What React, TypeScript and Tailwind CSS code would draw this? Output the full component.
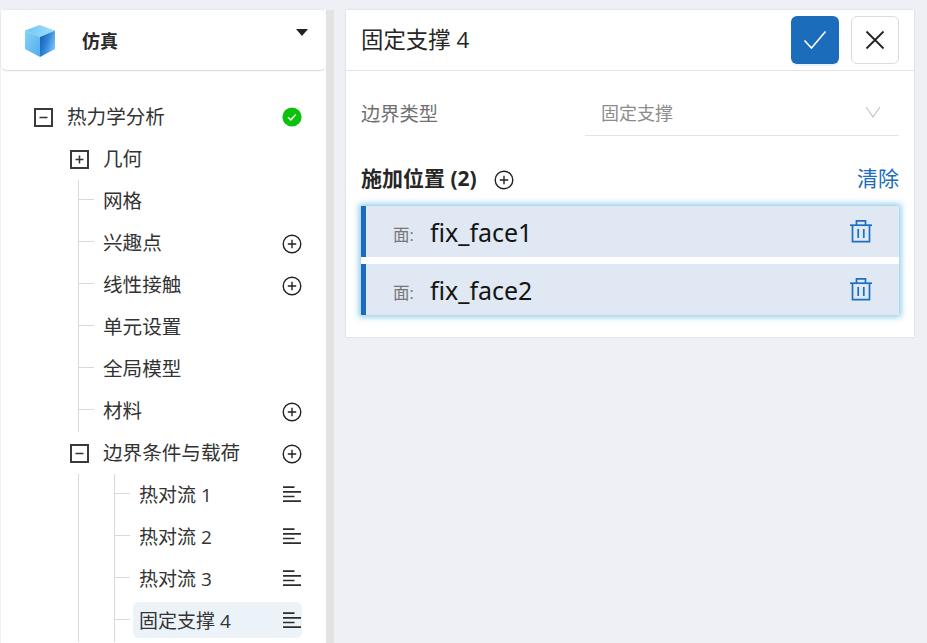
import React from "react";

const CJK = "font-['Open_Sans','Noto_Sans_CJK_SC',sans-serif]";

function BoxIcon({ plus }: { plus?: boolean }) {
  return (
    <svg width="19" height="19" viewBox="0 0 19 19" className="shrink-0">
      <rect x="1" y="1" width="17" height="17" fill="none" stroke="#3a3a3a" strokeWidth="2" />
      <path d="M5.5 9.5h8" stroke="#333" strokeWidth="1.5" />
      {plus && <path d="M9.5 5.5v8" stroke="#333" strokeWidth="1.5" />}
    </svg>
  );
}

function PlusCircle() {
  return (
    <svg width="20" height="20" viewBox="0 0 20 20" className="shrink-0 mt-[2px]">
      <circle cx="10" cy="10" r="8.8" fill="none" stroke="#222" strokeWidth="1.4" />
      <path d="M5.8 10h8.4M10 5.8v8.4" stroke="#222" strokeWidth="1.4" />
    </svg>
  );
}

function CheckBadge() {
  return (
    <svg width="20" height="20" viewBox="0 0 20 20" className="shrink-0">
      <circle cx="10" cy="10" r="9.6" fill="#0bc20b" />
      <path d="M6 10.2l2.8 2.7 5-5.4" fill="none" stroke="#fff" strokeWidth="1.5" />
    </svg>
  );
}

function ListIcon() {
  return (
    <svg width="18" height="18" viewBox="0 0 18 18" className="shrink-0">
      <path d="M0 2.2h11.5M0 6.8h18M0 11.5h11.5M0 16.2h18" stroke="#2c2c2c" strokeWidth="1.7" />
    </svg>
  );
}

function TrashIcon() {
  return (
    <svg width="24" height="24" viewBox="0 0 24 24" className="shrink-0">
      <g fill="none" stroke="#1e6fc0" strokeWidth="1.7">
        <path d="M1 6.2h22" />
        <path d="M7.5 6V1.8h9V6" />
        <path d="M3.5 6.2v16.4h17V6.2" />
        <path d="M9.2 10v9M14.8 10v9" />
      </g>
    </svg>
  );
}

function Cube() {
  return (
    <svg width="30" height="32" viewBox="0 0 30 32" className="shrink-0">
      <defs>
        <linearGradient id="cubeLeft" x1="0" y1="0" x2="1" y2="1">
          <stop offset="0" stopColor="#86d4f8" />
          <stop offset="1" stopColor="#50acea" />
        </linearGradient>
        <linearGradient id="cubeTop" x1="0" y1="0" x2="1" y2="0">
          <stop offset="0" stopColor="#6cc4f4" />
          <stop offset="1" stopColor="#a4e0fa" />
        </linearGradient>
        <linearGradient id="cubeRight" x1="0" y1="0" x2="1" y2="0.5">
          <stop offset="0" stopColor="#1058a8" />
          <stop offset="0.55" stopColor="#2f86d8" />
          <stop offset="1" stopColor="#76bdf5" />
        </linearGradient>
      </defs>
      <path d="M0 5.5L14.5 0 30 5.5 15 12z" fill="url(#cubeTop)" />
      <path d="M0 5.5L15 12v20L0 24z" fill="url(#cubeLeft)" />
      <path d="M30 5.5L15 12v20l15-8z" fill="url(#cubeRight)" />
    </svg>
  );
}

function HLine() {
  return <div className="h-px w-[15px] bg-[#d9d9d9] mb-[3px]" />;
}

function Guide({ width, tick }: { width: string; tick?: boolean }) {
  return (
    <div className={`h-full shrink-0 border-l border-[#d9d9d9] flex items-center ${width}`}>
      {tick && <HLine />}
    </div>
  );
}

function Top({ label, right }: { label: string; right?: React.ReactNode }) {
  return (
    <div className="h-[42px] flex items-center pl-[33px] pr-[24px]">
      <BoxIcon />
      <span className="ml-[14px] flex-1 text-[19.6px] text-[#333]">{label}</span>
      {right}
    </div>
  );
}

function Branch({ label, plus, right }: { label: string; plus?: boolean; right?: React.ReactNode }) {
  return (
    <div className="h-[42px] flex items-center pl-[69px] pr-[24px]">
      <BoxIcon plus={plus} />
      <span className="ml-[14px] flex-1 text-[19.6px] text-[#333]">{label}</span>
      {right}
    </div>
  );
}

function Leaf({ label, right }: { label: string; right?: React.ReactNode }) {
  return (
    <div className="h-[42px] flex items-center pl-[77px] pr-[24px]">
      <Guide width="w-[25px]" tick />
      <span className="flex-1 text-[19.6px] text-[#333]">{label}</span>
      {right}
    </div>
  );
}

function SubLeaf({ label, active }: { label: string; active?: boolean }) {
  return (
    <div className="h-[42px] flex items-center pl-[77px] pr-[24px]">
      <Guide width="w-[36px]" />
      <Guide width="w-[19px]" tick />
      <div
        className={`flex-1 h-[36px] mb-[2px] pl-[6px] pr-px rounded-[6px] flex items-center justify-between ${
          active ? "bg-[#ebf3f9]" : ""
        }`}
      >
        <span className="text-[19px] text-[#333] mt-[2px]">{label}</span>
        <ListIcon />
      </div>
    </div>
  );
}

function FaceRow({ name }: { name: string }) {
  return (
    <div className="h-[51px] bg-[#dfe8f3] border-l-[5px] border-[#1b6cbb] flex items-center pl-[27px] pr-[26px]">
      <span className="text-[16.5px] text-[#777] mt-[8px] w-[37px]">面:</span>
      <span className="flex-1 text-[25px] mt-[3px] text-[#141414] font-['Noto_Sans',sans-serif]">{name}</span>
      <div className="mb-[2px]">
        <TrashIcon />
      </div>
    </div>
  );
}

export default function App() {
  return (
    <div className={`h-screen overflow-hidden bg-[#eef0f5] flex pl-px pt-[10px] ${CJK}`}>
      {/* Left: model tree */}
      <div className="w-[325px] shrink-0 bg-white flex flex-col">
        <div className="h-[61px] shrink-0 rounded-[6px] border-b border-[#dedede] shadow-[0_0_2px_rgba(0,0,0,0.12)] flex pl-[24px] pr-[18px]">
          <div className="mt-[15px]">
            <Cube />
          </div>
          <span className="ml-[27px] flex-1 mt-[16px] leading-[30px] text-[18px] font-bold text-[#2b2b2b]">仿真</span>
          <div className="mt-[19px] w-0 h-0 border-x-[6.5px] border-x-transparent border-t-[7px] border-t-[#222]" />
        </div>

        <div className="pt-[25px]">
          <Top label="热力学分析" right={<CheckBadge />} />
          <Branch label="几何" plus />
          <Leaf label="网格" />
          <Leaf label="兴趣点" right={<PlusCircle />} />
          <Leaf label="线性接触" right={<PlusCircle />} />
          <Leaf label="单元设置" />
          <Leaf label="全局模型" />
          <Leaf label="材料" right={<PlusCircle />} />
          <Branch label="边界条件与载荷" right={<PlusCircle />} />
          <SubLeaf label="热对流 1" />
          <SubLeaf label="热对流 2" />
          <SubLeaf label="热对流 3" />
          <SubLeaf label="固定支撑 4" active />
        </div>
      </div>

      {/* Gutter */}
      <div className="w-[8px] shrink-0 bg-[#e3e3e3]" />

      {/* Right: boundary condition form */}
      <div className="ml-[12px] w-[568px] h-[327px] shrink-0 bg-white shadow-[0_0_2px_rgba(0,0,0,0.15)]">
        <div className="h-[61px] border-b border-[#e4e4e4] flex items-center pl-[15px] pr-[15px]">
          <span className="flex-1 text-[22.4px] text-[#262626]">
            固定支撑 <span className="font-medium">4</span>
          </span>
          <button className="w-[48px] h-[48px] rounded-[6px] bg-[#1b6cbb] flex items-center justify-center shadow-[0_2px_0_#ebf4fa]">
            <svg width="24" height="20" viewBox="0 0 24 20">
              <path d="M1.5 10.5l7 7.5L22.5 1.5" fill="none" stroke="#fff" strokeWidth="1.6" />
            </svg>
          </button>
          <button className="ml-[12px] w-[48px] h-[48px] rounded-[6px] bg-white border border-[#dcdcdc] flex items-center justify-center">
            <svg width="20" height="20" viewBox="0 0 20 20">
              <path d="M1.5 1.5l17 17M18.5 1.5l-17 17" fill="none" stroke="#222" strokeWidth="1.8" />
            </svg>
          </button>
        </div>

        <div className="px-[15px]">
          <div className="h-[65px] flex">
            <span className="w-[224px] pt-[27px] leading-[32px] text-[19.3px] text-[#707070]">边界类型</span>
            <div className="flex-1 h-[65px] border-b border-[#e4e4e4] flex items-center pl-[16px] pr-[18px]">
              <span className="flex-1 mt-[20px] text-[18px] text-[#8c8c8c]">固定支撑</span>
              <svg width="16" height="12" viewBox="0 0 16 12" className="mt-[20px] mb-[2px]">
                <path d="M1 1l7 10 7-10" fill="none" stroke="#c4c4c4" strokeWidth="1.2" />
              </svg>
            </div>
          </div>

          <div className="h-[70px] pt-[16px] flex items-center">
            <span className="text-[21px] font-bold text-[#262626]">施加位置 (2)</span>
            <div className="ml-[17px] flex-1">
              <PlusCircle />
            </div>
            <span className="text-[21px] text-[#1b6cbb]">清除</span>
          </div>

          <div className="flex flex-col gap-[7px] bg-white shadow-[0_0_6px_2px_rgba(80,175,225,0.65)]">
            <FaceRow name="fix_face1" />
            <FaceRow name="fix_face2" />
          </div>
        </div>
      </div>
    </div>
  );
}
